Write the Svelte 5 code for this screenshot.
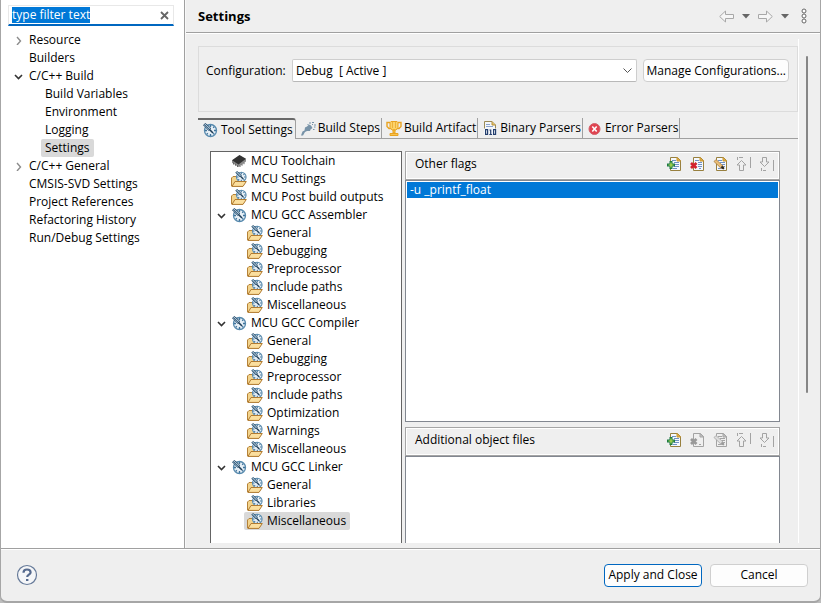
<script>
  import { onMount } from 'svelte';

  let filterBox;
  let filter = $state('type filter text');
  let config = $state('debug');

  const pages = [
    { name: 'Resource', level: 0, arrow: 'closed' },
    { name: 'Builders', level: 0 },
    { name: 'C/C++ Build', level: 0, arrow: 'open' },
    { name: 'Build Variables', level: 1 },
    { name: 'Environment', level: 1 },
    { name: 'Logging', level: 1 },
    { name: 'Settings', level: 1, selected: true },
    { name: 'C/C++ General', level: 0, arrow: 'closed' },
    { name: 'CMSIS-SVD Settings', level: 0 },
    { name: 'Project References', level: 0 },
    { name: 'Refactoring History', level: 0 },
    { name: 'Run/Debug Settings', level: 0 }
  ];

  const group = (name, children, selected) => [
    { name, level: 0, arrow: 'open', icon: 'gauge' },
    ...children.map((child) => ({ name: child, level: 1, icon: 'folder', selected: child === selected }))
  ];

  const tools = [
    { name: 'MCU Toolchain', level: 0, icon: 'chip' },
    { name: 'MCU Settings', level: 0, icon: 'folder' },
    { name: 'MCU Post build outputs', level: 0, icon: 'folder' },
    ...group('MCU GCC Assembler', ['General', 'Debugging', 'Preprocessor', 'Include paths', 'Miscellaneous']),
    ...group('MCU GCC Compiler', ['General', 'Debugging', 'Preprocessor', 'Include paths', 'Optimization', 'Warnings', 'Miscellaneous']),
    ...group('MCU GCC Linker', ['General', 'Libraries', 'Miscellaneous'], 'Miscellaneous')
  ];

  const tabs = [
    { name: 'Tool Settings', icon: 'gauge', active: true },
    { name: 'Build Steps', icon: 'steps' },
    { name: 'Build Artifact', icon: 'trophy' },
    { name: 'Binary Parsers', icon: 'binary' },
    { name: 'Error Parsers', icon: 'error' }
  ];

  const actions = ['Add', 'Delete', 'Edit', 'Move up', 'Move down'];

  const panels = [
    { name: 'Other flags', items: ['-u _printf_float'], enabled: ['Add', 'Delete', 'Edit'] },
    { name: 'Additional object files', items: [], enabled: ['Add'] }
  ];

  onMount(() => {
    filterBox.focus();
    filterBox.select();
  });
</script>

{#snippet gaugeShape()}
  <circle cx="8.500" cy="8.500" r="6" fill="#e6eff6" stroke="#5689ad" stroke-width="1.300" />
  <path d="M8.500 3v2M8.500 12v2M3 8.500h2M12 8.500h2M4.800 12.200l1-1M12.200 4.800l-1 1M12.200 12.200l-1-1" stroke="#3f739b" stroke-width="1.300" />
  <path d="M1.500 3l2-1.500 5.200 4.700L6.800 8.500z" fill="#a9c2d4" stroke="#2b5070" stroke-width="1" />
  <path d="M3 3l4 4" stroke="#2b5070" stroke-width=".8" />
  <path d="M7.500 7.500l3.500 3.500" stroke="#1f3d57" stroke-width="1.600" />
{/snippet}

{#snippet icon(kind)}
  <svg class="icon" viewBox="0 0 16 16" fill="none" aria-hidden="true">
    {#if kind === 'gauge'}
      {@render gaugeShape()}
    {:else if kind === 'folder'}
      <path d="M.5 15V7L2 5.500h3.500l1 1.500H12v8z" fill="#f3d48d" stroke="#b58238" />
      <g transform="translate(3.500 -.8) scale(.8)">{@render gaugeShape()}</g>
      <path d="M1 15.400L4 10.500h11.300L12 15.400z" fill="#fbdf9e" stroke="#b07a30" />
    {:else if kind === 'chip'}
      <path d="M1 7.500L8.500 2.500 15 6.200v2.300L7.500 14 1 9.800z" fill="#8c8c8c" />
      <path d="M1 7.200L8.500 2 15 5.800 7.500 11.500z" fill="#333" />
      <path d="M2.500 9.500v2M4.500 10.700v2M6.500 12v2M9 12.500v1.500M11 11v1.700M13 9.600v1.600" stroke="#666" />
    {:else if kind === 'steps'}
      <path d="M1 15.500l1.500-4 2-1 .5-3 2-1L9 4.500l2 1 1.500 2.500-2 1.500-.5 1.500H7L5 12l-2 3.500z" fill="#7893a8" />
      <path d="M9 3h2M12 2.500h2M12 4.500h1M14 5h2M14 7h1.500M7.500 4.500h1M13 9.500h1.500" stroke="#7893a8" stroke-width="1.200" />
    {:else if kind === 'trophy'}
      <path d="M4.500 2.500H1v4L3 8.500h2M11.500 2.500H15v4L13 8.500h-2" stroke="#e9a321" stroke-width="1.400" />
      <path d="M5 1.500h6l1 1v5L10 10H6L4 7.500v-5z" fill="#fbd36a" stroke="#e9a321" />
      <path d="M6.500 2v6M9.500 2v6" stroke="#efb03a" />
      <path d="M7 10h2v3H7zM4 13.500h8v2H4z" fill="#f7c24c" stroke="#e9a321" />
    {:else if kind === 'binary'}
      <path d="M2.500 1.500H10l3.500 3.500v9.500h-11z" fill="#f4f7fb" stroke="#9a8a55" />
      <path d="M10 1.500V5h3.500" fill="#e5c26b" stroke="#b6913d" />
      <path d="M4 4.500h4M4 6.500h7" stroke="#8ba3cc" />
      <path d="M2 8.500h13V15H2z" fill="#f4f7fb" />
      <path d="M3.600 9.700h2v4.600h-2zM11.600 9.700h2v4.600h-2z" stroke="#253f6e" stroke-width="1.200" />
      <path d="M7.500 10h1.200v4.500M7.300 14.500h2.800" stroke="#253f6e" stroke-width="1.200" />
    {:else if kind === 'error'}
      <circle cx="7.500" cy="9" r="5.500" fill="#e04350" stroke="#d4606a" />
      <path d="M5.300 6.500l4.400 5M9.700 6.500l-4.400 5" stroke="#fff" stroke-width="1.600" />
    {/if}
  </svg>
{/snippet}

{#snippet actionIcon(kind, on)}
  {@const edge = on ? '#98803f' : '#a3a3a3'}
  {@const ink = on ? '#6f91c4' : '#a3a3a3'}
  <svg class="icon" viewBox="0 0 16 16" fill="none" aria-hidden="true">
    {#if kind === 'Move up'}
      <path d="M5.500 4.500L10 9H7.500v5.500h-4V9H1zM1.500 1v3M3 1.500h4M14.500 1v11" stroke="#a3a3a3" />
    {:else if kind === 'Move down'}
      <path d="M5.500 10.500L10 6H7.500V1.500h-4V6H1zM2.500 12v3M4 14.500h3M14.500 4v11" stroke="#a3a3a3" />
    {:else}
      <path d="M3.500 1.500h7l3 3v10h-10z" fill={on ? '#f5f9fe' : '#efefef'} stroke={edge} />
      <path d="M10 1.500v3.500h3.500z" fill={on ? '#e6b44c' : '#c8c8c8'} stroke={on ? '#c9962e' : '#a3a3a3'} />
      {#if kind === 'Add'}
        <path d="M5 4.500h4M7 6.500h5M8 8.500h4M7 10.500h5M6 12.500h4" stroke={ink} />
        <path d="M2.500 5h3v2.500H8v3H5.500V13h-3v-2.500H0v-3h2.500z" fill="#1c7a45" />
        <path d="M4 6.500v5M1.500 9h5" stroke="#b7e04f" stroke-width="1.200" />
      {:else if kind === 'Delete'}
        {#if on}<path d="M5 4.500h4M8 6.500h4M8 8.500h4M8 10.500h4" stroke={ink} />{/if}
        <path d="M9 12.500h2" stroke={ink} />
        <path d="M1 7l5.500 5M6.500 7L1 12" stroke={on ? '#d3222f' : '#999'} stroke-width="2.800" />
      {:else}
        <path d="M5 4.500h4M7 6.500h5M9 8.500h3M10 10.500h2M5 12.500h5" stroke={ink} />
        <path d="M1 5.500l2-2 7 6.500.8 2.800-2.800-.6z" fill={on ? '#e8bd78' : '#ddd'} stroke={on ? '#a87a3a' : '#a3a3a3'} stroke-width=".8" />
        <path d="M8.500 10.500l2.300 2.200" stroke={on ? '#222' : '#999'} stroke-width="2" />
      {/if}
    {/if}
  </svg>
{/snippet}

{#snippet tree(rows, label)}
  <ul class="tree" aria-label={label}>
    {#each rows as row}
      <li class:child={row.level === 1}>
        <span class="arrow">
          {#if row.arrow === 'open'}
            <svg viewBox="0 0 9 9"><path d="M1 3l3.500 3.500L8 3" fill="none" stroke="#333" stroke-width="1.600" /></svg>
          {:else if row.arrow === 'closed'}
            <svg viewBox="0 0 9 9"><path d="M3 1l3.500 4L3 9" fill="none" stroke="#8c8c8c" stroke-width="1.400" /></svg>
          {/if}
        </span>
        <button class="node" class:selected={row.selected}>
          {#if row.icon}{@render icon(row.icon)}{/if}{row.name}
        </button>
      </li>
    {/each}
  </ul>
{/snippet}

<div class="dialog">
  <div class="body">
    <nav class="side">
      <div class="filter">
        <input type="text" aria-label="Filter pages" spellcheck="false" bind:this={filterBox} bind:value={filter} />
        <button class="clear" aria-label="Clear filter" onclick={() => (filter = '')}>
          <svg viewBox="0 0 9 9"><path d="M1 1l7 7M8 1L1 8" stroke="#666" stroke-width="1.800" /></svg>
        </button>
      </div>
      {@render tree(pages, 'Pages')}
    </nav>

    <main>
      <header>
        <h1>Settings</h1>
        <div class="history">
          <button aria-label="Back">
            <svg width="15" height="13" viewBox="0 0 15 13"><path d="M.7 6.500L6.500 1v3.500h8v4h-8V12z" fill="#f6f6f6" stroke="#a8a8a8" /></svg>
          </button>
          <button aria-label="Back history">
            <svg width="8" height="5" viewBox="0 0 8 5"><path d="M0 0h8L4 4.500z" fill="#666" /></svg>
          </button>
          <button aria-label="Forward">
            <svg width="15" height="13" viewBox="0 0 15 13"><path d="M14.300 6.500L8.500 1v3.500h-8v4h8V12z" fill="#f6f6f6" stroke="#a8a8a8" /></svg>
          </button>
          <button aria-label="Forward history">
            <svg width="8" height="5" viewBox="0 0 8 5"><path d="M0 0h8L4 4.500z" fill="#666" /></svg>
          </button>
          <button class="more" aria-label="View menu">
            <svg width="6" height="16" viewBox="0 0 6 16" fill="#fff" stroke="#666"><circle cx="3" cy="3" r="2" /><circle cx="3" cy="8" r="2" /><circle cx="3" cy="13" r="2" /></svg>
          </button>
        </div>
      </header>

      <div class="viewport">
        <div class="content">
          <section class="config">
            <label for="configuration">Configuration:</label>
            <div class="dropdown">
              <select id="configuration" bind:value={config}>
                <option value="debug">Debug &nbsp;[ Active ]</option>
                <option value="release">Release</option>
              </select>
              <svg width="9" height="6" viewBox="0 0 9 6"><path d="M.5 .5l4 4 4-4" fill="none" stroke="#555" /></svg>
            </div>
            <button class="push">Manage Configurations...</button>
          </section>

          <div class="tabs" role="tablist">
            {#each tabs as tab}
              <button role="tab" aria-selected={!!tab.active} class:active={tab.active}>
                {@render icon(tab.icon)}{tab.name}
              </button>
            {/each}
          </div>

          <div class="tool">
            <div class="tooltree">{@render tree(tools, 'Tools')}</div>
            <div class="panels">
              {#each panels as panel}
                <section class="panel">
                  <div class="bar">
                    <h2>{panel.name}</h2>
                    {#each actions as action}
                      <button aria-label={action} disabled={!panel.enabled.includes(action)}>
                        {@render actionIcon(action, panel.enabled.includes(action))}
                      </button>
                    {/each}
                  </div>
                  <ul class="list" aria-label={panel.name}>
                    {#each panel.items as item}<li>{item}</li>{/each}
                  </ul>
                </section>
              {/each}
            </div>
          </div>
        </div>
        <div class="scroll"><div class="thumb"></div></div>
      </div>
    </main>
  </div>

  <footer>
    <button class="help" aria-label="Help">
      <svg width="22" height="22" viewBox="0 0 22 22" fill="none">
        <circle cx="11" cy="11" r="9.500" fill="#f5f6f8" stroke="#667a99" stroke-width="1.200" />
        <path d="M7.500 8.700C7.500 6.500 9 5.500 11 5.500s3.600 1.100 3.600 2.900c0 2.200-3.400 2.300-3.400 4.600" stroke="#566a8e" stroke-width="2.200" />
        <path d="M10 15h2.400v2H10z" fill="#566a8e" />
      </svg>
    </button>
    <button class="push primary">Apply and Close</button>
    <button class="push">Cancel</button>
  </footer>
</div>

<style>
  :global(body) {
    background: #bdbdbd;
  }
  .dialog {
    box-sizing: border-box;
    height: 100vh;
    display: flex;
    flex-direction: column;
    border: 1px solid #a6a6a6;
    border-top: 0;
    border-bottom-width: 2px;
    border-radius: 0 0 7px 7px;
    background: #efefef;
    color: #000;
    font: 12px/18px 'Open Sans', 'Noto Sans', sans-serif;
    overflow: hidden;
  }
  button,
  input,
  select {
    font: inherit;
    color: inherit;
    margin: 0;
    padding: 0;
    border: 0;
    background: none;
    outline: none;
  }
  svg {
    display: block;
    flex: none;
  }
  h1,
  h2,
  ul {
    margin: 0;
    padding: 0;
    list-style: none;
  }
  .icon {
    width: 16px;
    height: 16px;
  }
  .body {
    flex: 1;
    min-height: 0;
    display: flex;
  }
  .side {
    box-sizing: border-box;
    flex: 0 0 184px;
    min-width: 0;
    padding-top: 5px;
    background: #fff;
    border-right: 1px solid #a0a0a0;
  }
  .filter {
    display: flex;
    align-items: center;
    height: 18px;
    margin: 0 10px 5px 7px;
    padding: 0 4px 0 3px;
    border: 1px solid #e8e8e8;
    border-bottom: 2px solid #0067c0;
  }
  .filter input {
    flex: 1;
    width: 0;
    height: 16px;
    line-height: 16px;
  }
  .filter input::selection {
    background: #0078d7;
    color: #fff;
  }
  .clear svg,
  .arrow svg {
    width: 9px;
    height: 9px;
  }
  .tree li {
    display: flex;
    align-items: center;
    height: 18px;
  }
  .arrow {
    flex: 0 0 24px;
    box-sizing: border-box;
    padding-left: 13px;
  }
  .child {
    padding-left: 16px;
  }
  .node {
    display: flex;
    align-items: center;
    gap: 4px;
    height: 18px;
    padding: 0 4px;
    border-radius: 2px;
    white-space: nowrap;
  }
  .selected {
    background: #d9d9d9;
  }
  main {
    flex: 1;
    min-width: 0;
    display: flex;
    flex-direction: column;
    border-left: 1px solid #f8f8f8;
  }
  header {
    display: flex;
    align-items: center;
    justify-content: space-between;
    height: 32px;
    padding: 0 13px 0 12px;
    border-bottom: 1px solid #a0a0a0;
    box-shadow: 0 1px #fff;
  }
  h1 {
    font-size: 13px;
    line-height: 18px;
  }
  .history {
    display: flex;
    align-items: center;
    gap: 8px;
  }
  .history .more {
    margin-left: 4px;
  }
  .viewport {
    flex: 1;
    min-height: 0;
    display: flex;
    margin: 6px 0 5px;
  }
  .content {
    flex: 1;
    min-width: 0;
    display: flex;
    flex-direction: column;
    padding: 7px 0 0 12px;
    border-right: 1px solid #fff;
    overflow: hidden;
  }
  .config {
    flex: none;
    display: flex;
    align-items: flex-start;
    height: 52px;
    padding: 12px 8px 0 7px;
    border: 1px solid #dcdcdc;
  }
  .config label {
    flex: 0 0 86px;
    line-height: 24px;
  }
  .dropdown {
    flex: 1;
    display: flex;
    align-items: center;
    margin-right: 6px;
    padding-right: 4px;
    border: 1px solid #cecece;
    border-bottom-color: #b8b8b8;
    border-radius: 2px;
    background: #fff;
  }
  select {
    flex: 1;
    height: 21px;
    padding-left: 3px;
    appearance: none;
  }
  .push {
    box-sizing: border-box;
    height: 23px;
    min-width: 98px;
    padding: 0 2px;
    line-height: 20px;
    border: 1px solid #cfcfcf;
    border-radius: 4px;
    background: #fdfdfd;
    white-space: nowrap;
  }
  .primary {
    border-color: #0067c0;
  }
  .tabs {
    flex: none;
    display: flex;
    height: 20px;
    margin-top: 6px;
    border-bottom: 1px solid #a0a0a0;
  }
  .tabs button {
    display: flex;
    align-items: center;
    gap: 2px;
    padding: 0 1px 0 4px;
    border-right: 1px solid #a0a0a0;
    white-space: nowrap;
  }
  .tabs .active {
    height: 21px;
    box-sizing: border-box;
    gap: 3px;
    padding-right: 2px;
    border-top: 2px solid #696969;
    border-radius: 0 3px 0 0;
    background: #efefef;
  }
  .tool {
    flex: 1;
    min-height: 0;
    display: flex;
    gap: 3px;
    padding: 12px 18px 0 12px;
  }
  .tooltree {
    flex: 0 0 190px;
    overflow: hidden;
    border: 1px solid #646464;
    border-bottom: 0;
    background: #fff;
  }
  .tooltree .arrow {
    flex-basis: 17px;
    padding-left: 6px;
  }
  .tooltree .node {
    padding-left: 3px;
  }
  .panels {
    flex: 1;
    min-width: 0;
    overflow: hidden;
  }
  .panel {
    margin-bottom: 5px;
  }
  .bar {
    display: flex;
    align-items: center;
    gap: 7px;
    height: 23px;
    padding: 0 4px 4px 9px;
    border: 1px solid #a5a5a5;
    box-shadow: inset 0 0 0 1px #fff;
  }
  .bar h2 {
    flex: 1;
    font-size: 12px;
    font-weight: 400;
  }
  .list {
    height: 238px;
    padding: 1px;
    border: 1px solid #828790;
    background: #fff;
  }
  .list li {
    height: 16px;
    line-height: 16px;
    padding-left: 3px;
    background: #0078d7;
    color: #fff;
  }
  .scroll {
    flex: 0 0 21px;
    padding-top: 17px;
  }
  .thumb {
    width: 2px;
    height: 337px;
    margin-left: 7px;
    border-radius: 1px;
    background: #868686;
  }
  footer {
    display: flex;
    align-items: center;
    gap: 8px;
    height: 52px;
    padding: 0 12px 0 15px;
    border-top: 1px solid #a0a0a0;
    box-shadow: inset 0 1px #fff;
  }
  .help {
    margin-right: auto;
  }
</style>
